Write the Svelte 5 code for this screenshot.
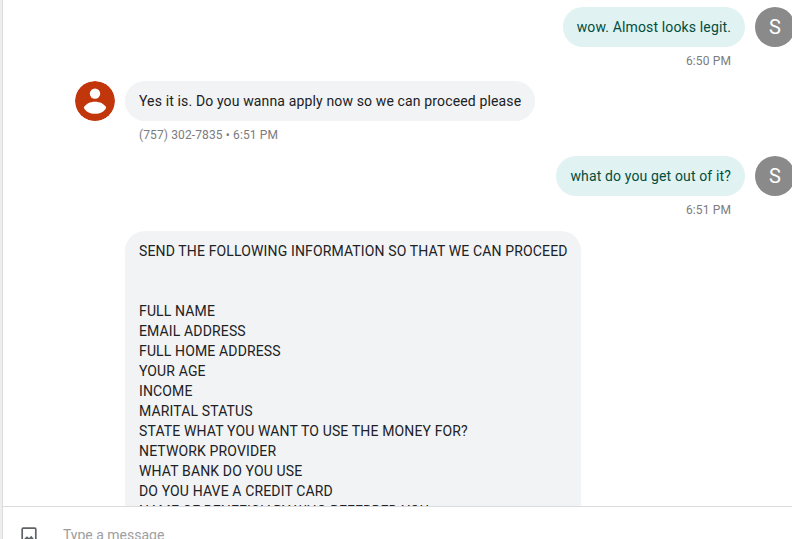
<script>
  const messages = [
    { own: true, lines: ['wow. Almost looks legit.'], meta: '6:50 PM' },
    { own: false, lines: ['Yes it is. Do you wanna apply now so we can proceed please'], meta: '(757) 302-7835 • 6:51 PM' },
    { own: true, lines: ['what do you get out of it?'], meta: '6:51 PM' },
    {
      own: false,
      continued: true,
      lines: [
        'SEND THE FOLLOWING INFORMATION SO THAT WE CAN PROCEED',
        '',
        '',
        'FULL NAME',
        'EMAIL ADDRESS',
        'FULL HOME ADDRESS',
        'YOUR AGE',
        'INCOME',
        'MARITAL STATUS',
        'STATE WHAT YOU WANT TO USE THE MONEY FOR?',
        'NETWORK PROVIDER',
        'WHAT BANK DO YOU USE',
        'DO YOU HAVE A CREDIT CARD',
        'NAME OF BENEFICIARY WHO REFERRED YOU',
      ],
    },
  ];
</script>

<div class="app">
  <div class="rail"></div>
  <main>
    <div class="thread">
      {#each messages as m, i}
        <div class="row" class:own={m.own} class:first={i === 0}>
          {#if m.own}
            <div class="avatar initial">S</div>
          {:else if m.continued}
            <div class="avatar"></div>
          {:else}
            <svg class="avatar" viewBox="0 0 40 40">
              <circle cx="20" cy="20" r="20" fill="#c2360c" />
              <circle cx="20" cy="12.600" r="5.200" fill="#fff" />
              <path d="M8.900 26.700C10.500 22.800 15 20.700 20 20.700S29.500 22.800 31.100 26.700C29.500 30.600 25 32.800 20 32.800S10.500 30.600 8.900 26.700Z" fill="#fff" />
            </svg>
          {/if}
          <div class="content">
            <div class="bubble">
              {#each m.lines as line}<div class="line">{line}</div>{/each}
            </div>
            {#if m.meta}<div class="meta">{m.meta}</div>{/if}
          </div>
        </div>
      {/each}
    </div>
    <div class="composer">
      <svg class="picture" width="24" height="24" viewBox="0 0 24 24" fill="none">
        <rect x="5.200" y="4.200" width="13.600" height="15.600" rx="1" stroke="#5f6368" stroke-width="1.700" />
        <path d="M7.500 16V14.500L10 12.200L12 14L14.300 11.800L16.500 14.500V16Z" fill="#5f6368" />
      </svg>
      <span class="placeholder">Type a message</span>
    </div>
  </main>
</div>

<style>
  .app {
    display: flex;
    width: 792px;
    height: 539px;
    overflow: hidden;
    background: #fff;
    font-family: Roboto, sans-serif;
  }
  .rail {
    flex: none;
    box-sizing: border-box;
    width: 3px;
    background: #eee;
    border-right: 1px solid #dcdcdc;
  }
  main {
    flex: none;
    width: 792px;
    height: 539px;
    display: flex;
    flex-direction: column;
  }
  .thread {
    height: 506px;
    flex: none;
    overflow: hidden;
    padding: 7px 0 0 72px;
    box-sizing: border-box;
  }
  .row {
    display: flex;
    gap: 10px;
    min-height: 75px;
  }
  .row.first {
    min-height: 74px;
  }
  .row.own {
    width: 720px;
    flex-direction: row-reverse;
  }
  .avatar {
    flex: none;
    width: 40px;
    height: 40px;
    border-radius: 50%;
  }
  .initial {
    background: #8a8a8a;
    color: #fff;
    font-size: 20px;
    line-height: 40px;
    text-align: center;
  }
  .content {
    display: flex;
    flex-direction: column;
    align-items: flex-start;
  }
  .own .content {
    align-items: flex-end;
  }
  .bubble {
    padding: 10px 13.700px 10px 14px;
    border-radius: 20px;
    background: #f1f3f4;
    color: #202124;
    font-size: 14px;
    line-height: 20px;
    letter-spacing: 0.14px;
    white-space: nowrap;
  }
  .own .bubble {
    padding: 10px 14px;
    background: #e0f2f1;
    color: #004d40;
  }
  .line {
    height: 20px;
  }
  .meta {
    padding: 6px 14px 0;
    color: #7c7c7c;
    font-size: 12px;
    line-height: 16px;
    letter-spacing: 0.12px;
  }
  .composer {
    flex: none;
    height: 33px;
    box-sizing: border-box;
    border-top: 1px solid #dadce0;
    overflow: hidden;
    display: flex;
    align-items: flex-start;
    padding-left: 14px;
  }
  .picture {
    margin-top: 17px;
    flex: none;
  }
  .placeholder {
    margin: 18px 0 0 22px;
    color: #9e9e9e;
    font-size: 14px;
    line-height: 20px;
  }
</style>
